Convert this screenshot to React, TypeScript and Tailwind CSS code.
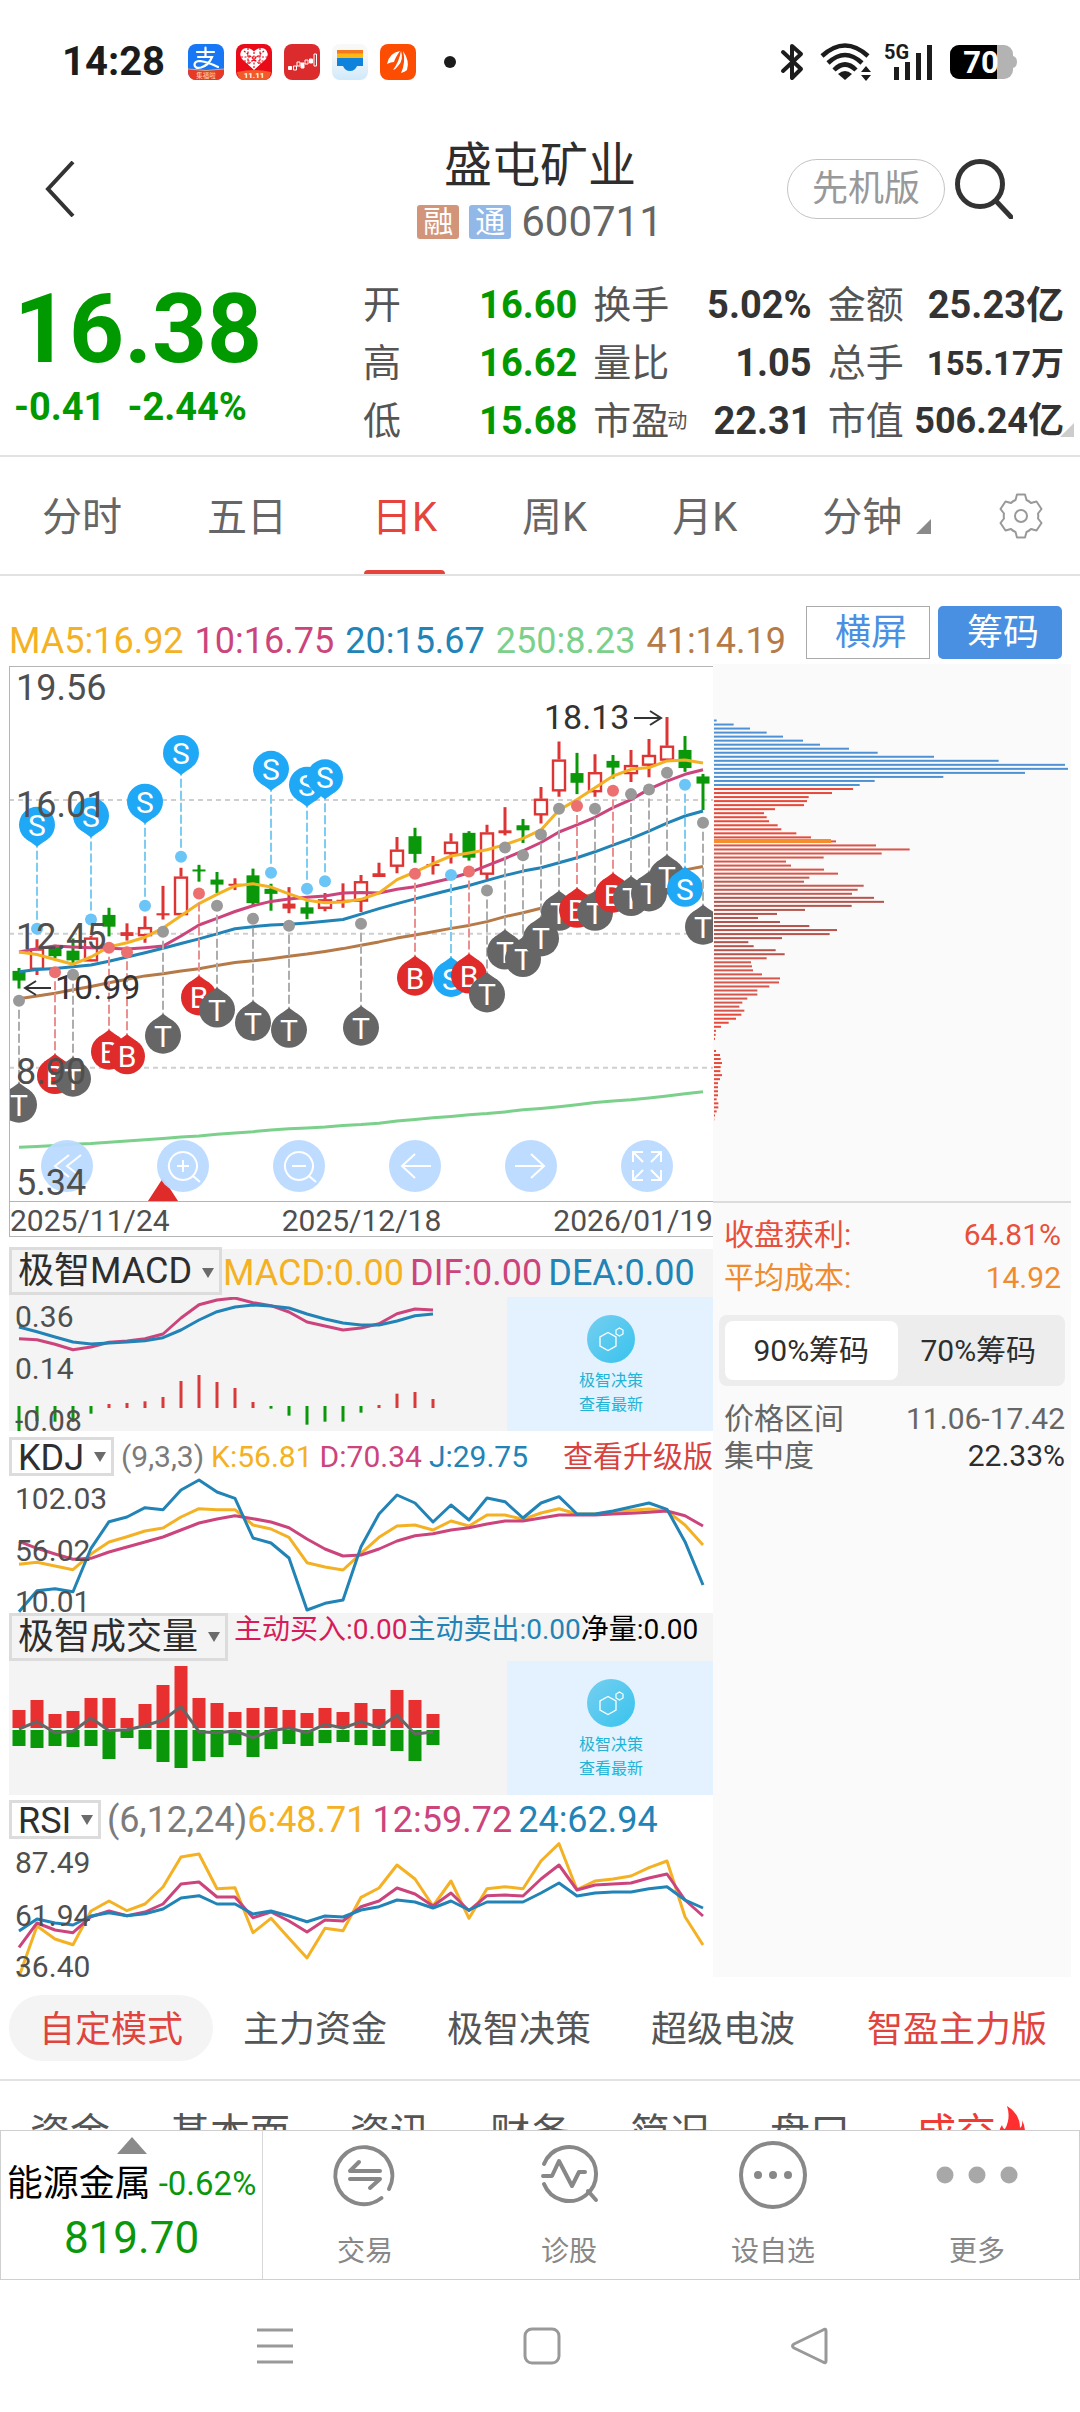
import React, { useState } from "react";

const STEP = 18;
const X0 = 19;
const px = (i: number) => X0 + STEP * i;

/* ---------- data ---------- */

// Vertical chart units per pixel for the price pane and the indicator panes.
const PRICE_UNIT = 2.376;
const PANE_UNIT = 3;
const py = (v: number) => v / PRICE_UNIT;

type Candle = [high: number, low: number, top: number, bottom: number, kind: "g" | "r" | "h"];

const candles: Candle[] = [
  [898, 947, 905, 928, "g"], [830, 915, 852, 900, "h"], [843, 875, 848, 870, "g"], [828, 888, 857, 880, "g"],
  [822, 882, 826, 880, "h"], [755, 823, 772, 800, "g"], [792, 833, 813, 822, "r"], [775, 838, 801, 820, "h"],
  [703, 783, 768, 773, "r"], [660, 770, 681, 770, "h"], [653, 693, 664, 668, "g"], [670, 720, 688, 700, "g"],
  [685, 713, 698, 701, "r"], [662, 750, 678, 744, "g"], [698, 762, 710, 722, "g"], [706, 768, 745, 757, "r"],
  [740, 782, 754, 769, "g"], [720, 763, 735, 755, "h"], [697, 755, 736, 742, "r"], [677, 765, 692, 738, "h"],
  [648, 682, 673, 682, "r"], [587, 673, 617, 655, "h"], [565, 648, 585, 627, "g"], [632, 676, 651, 656, "r"],
  [578, 650, 598, 625, "h"], [573, 643, 577, 636, "g"], [558, 687, 576, 674, "h"], [516, 583, 571, 578, "r"],
  [544, 601, 559, 571, "g"], [468, 555, 496, 533, "h"], [360, 491, 403, 476, "h"], [387, 485, 435, 458, "g"],
  [390, 491, 433, 478, "h"], [392, 448, 406, 422, "g"], [380, 456, 416, 435, "h"], [354, 445, 392, 415, "h"],
  [302, 404, 370, 403, "h"], [347, 432, 380, 423, "g"], [437, 523, 443, 460, "g"],
];

const ma5 = [860, 866, 878, 889, 872, 848, 838, 825, 803, 774, 745, 723, 703, 698, 706, 722, 737, 743, 741, 735, 720, 688, 670, 650, 632, 625, 617, 605, 590, 570, 523, 498, 470, 442, 426, 422, 406, 404, 411];
const ma10 = [860, 852, 846, 848, 850, 851, 853, 850, 846, 822, 796, 780, 764, 750, 740, 734, 730, 727, 720, 719, 720, 711, 705, 695, 685, 672, 655, 638, 620, 600, 575, 558, 540, 517, 498, 473, 454, 438, 427];
const ma20 = [907, 902, 899, 895, 891, 882, 872, 862, 851, 840, 829, 817, 805, 800, 796, 794, 791, 787, 783, 770, 757, 745, 734, 723, 712, 702, 690, 678, 668, 660, 648, 636, 622, 606, 591, 573, 554, 537, 525];
const ma41 = [971, 965, 958, 950, 942, 933, 925, 917, 912, 905, 900, 892, 885, 881, 876, 870, 865, 859, 852, 844, 836, 827, 820, 812, 804, 797, 788, 776, 767, 756, 745, 733, 722, 712, 700, 689, 678, 665, 657];
const ma250 = [1324, 1322, 1320, 1317, 1315, 1312, 1309, 1306, 1303, 1300, 1297, 1293, 1290, 1287, 1283, 1280, 1278, 1276, 1272, 1270, 1267, 1262, 1258, 1254, 1251, 1247, 1244, 1240, 1235, 1232, 1228, 1223, 1218, 1214, 1211, 1207, 1202, 1197, 1192];

type Mark = [index: number, dot: number, kind: "S" | "B" | "T", above?: boolean];
const marks: Mark[] = [
  [0, 976, "T"], [1, 805, "S", true], [2, 908, "B"], [3, 914, "T"], [4, 783, "S", true], [5, 850, "B"], [6, 861, "B"],
  [7, 750, "S", true], [8, 812, "T"], [9, 634, "S", true], [10, 721, "B"], [11, 750, "T"], [13, 781, "T"],
  [14, 672, "S", true], [15, 798, "T"], [16, 710, "S", true], [17, 692, "S", true], [19, 793, "T"], [22, 674, "B"],
  [24, 677, "S"], [25, 669, "B"], [26, 714, "T"], [27, 612, "T"], [28, 630, "T"], [29, 581, "T"], [30, 520, "T"],
  [31, 513, "B"], [32, 520, "T"], [33, 477, "B"], [34, 485, "T"], [35, 474, "T"], [36, 434, "T"], [37, 463, "S"], [38, 553, "T"],
];
const markColors = {
  S: { pin: "#1fa8f5", dot: "#6cc5f7", dash: "#7fccf2" },
  B: { pin: "#e02b2b", dot: "#ec7070", dash: "#ea9090" },
  T: { pin: "#666666", dot: "#999999", dash: "#adadad" },
};

const chipsBlue = [8, 59, 108, 158, 207, 267, 318, 405, 491, 660, 854, 1053, 1062, 933, 688, 482, 437];
const chipsRed = [
  417, 354, 284, 279, 270, 183, 150, 158, 165, 191, 202, 247, 291, 366, 486, 587, 503, 329, 216, 231, 330, 372, 286, 270, 449,
  431, 414, 480, 510, 413, 273, 189, 132, 198, 286, 369, 347, 204, 103, 119, 185, 212, 158, 111, 114, 117, 144, 198, 195, 166,
  130, 130, 100, 85, 76, 91, 82, 66, 44, 21, 6, 5, 3, 0, 0, 6, 18, 20, 24, 20, 19, 24, 18, 12, 12, 12, 12, 8, 13, 13, 8, 3, 1,
];
const redShade = (i: number) =>
  i < 13 ? "#e8493a" : i < 22 ? "#db5448" : i < 27 ? "#c65850" : i < 42 ? "#b4544d" : i < 56 ? "#d3574c" : "#e8493a";

const macdDif = [326, 329, 343, 359, 351, 337, 333, 326, 312, 264, 224, 210, 204, 218, 227, 246, 276, 288, 300, 294, 281, 251, 237, 240];
const macdDea = [291, 305, 321, 336, 342, 339, 336, 332, 323, 300, 270, 245, 231, 225, 228, 234, 252, 267, 279, 285, 285, 273, 257, 252];
const macdBars = [606, 573, 575, 576, 551, 522, 519, 514, 501, 453, 435, 456, 474, 516, 536, 557, 584, 575, 575, 548, 525, 491, 486, 507];

const kdjK = [1003, 997, 1008, 1019, 972, 936, 920, 903, 894, 861, 836, 839, 839, 885, 897, 922, 998, 1011, 1020, 970, 922, 888, 885, 900, 873, 888, 855, 855, 868, 849, 836, 852, 852, 846, 841, 837, 843, 885, 945];
const kdjD = [934, 955, 972, 988, 985, 966, 951, 936, 921, 900, 879, 867, 857, 866, 876, 893, 927, 957, 978, 975, 957, 933, 917, 911, 900, 893, 882, 873, 873, 864, 855, 855, 855, 852, 850, 847, 843, 857, 888];
const kdjJ = [1145, 1082, 1076, 1085, 955, 875, 861, 833, 839, 780, 750, 786, 805, 924, 939, 984, 1140, 1120, 1110, 950, 852, 795, 819, 876, 825, 870, 804, 815, 864, 819, 800, 852, 852, 843, 831, 819, 838, 935, 1065];

const volBuy = [330, 300, 342, 333, 294, 294, 354, 312, 255, 198, 294, 309, 336, 324, 321, 330, 339, 324, 336, 309, 327, 270, 300, 342];
const volSell = [438, 444, 438, 441, 438, 477, 414, 447, 486, 504, 483, 471, 435, 471, 447, 432, 438, 429, 426, 435, 438, 453, 483, 435];
const volNet = [387, 365, 398, 394, 354, 392, 389, 377, 360, 320, 395, 398, 393, 413, 392, 384, 398, 373, 384, 365, 383, 345, 402, 396];

const rsi6 = [1130, 978, 1017, 1034, 933, 903, 932, 912, 861, 771, 762, 866, 863, 998, 955, 1015, 1074, 985, 992, 892, 864, 795, 837, 918, 843, 955, 866, 860, 866, 783, 731, 869, 843, 837, 828, 803, 783, 950, 1035];
const rsi12 = [1042, 969, 990, 998, 950, 933, 947, 936, 912, 852, 846, 891, 891, 953, 936, 963, 996, 960, 963, 920, 903, 864, 882, 918, 879, 932, 887, 885, 888, 837, 795, 870, 855, 852, 849, 834, 822, 900, 948];
const rsi24 = [993, 957, 969, 975, 948, 938, 947, 941, 927, 894, 887, 912, 912, 942, 933, 948, 965, 948, 951, 930, 920, 900, 906, 924, 903, 930, 906, 906, 906, 879, 849, 888, 879, 876, 876, 866, 860, 900, 924];

/* ---------- shared drawing ---------- */

const C = { yellow: "#f4b124", pink: "#cc447c", blue: "#2183b6", green: "#7bd08b", brown: "#b57a48" };

function Line({ data, color, unit = PANE_UNIT, width = 3 }: { data: number[]; color: string; unit?: number; width?: number }) {
  return (
    <polyline
      fill="none"
      stroke={color}
      strokeWidth={width}
      strokeLinejoin="round"
      points={data.map((v, i) => `${px(i)},${(v / unit).toFixed(1)}`).join(" ")}
    />
  );
}

function AxisLabel({ y, x = 15, size = 30, children }: { y: number; x?: number; size?: number; children: React.ReactNode }) {
  return (
    <text x={x} y={y} fontSize={size} fill="#4f4f4f">
      {children}
    </text>
  );
}

function PriceChart() {
  return (
    <svg viewBox="9 76 704 535" className="block w-full" role="img" aria-label="日K线图">
      {[499, 817, 1135].map((v) => (
        <line key={v} x1="9" x2="713" y1={py(v)} y2={py(v)} stroke="#cfcfcf" strokeWidth="2" strokeDasharray="5 4" />
      ))}
      {candles.map(([h, l, t, b, kind], i) => {
        const x = px(i);
        const color = kind === "g" ? "#0a970a" : "#dd3434";
        if (kind === "h") {
          return (
            <g key={i} stroke={color} fill="none">
              <path d={`M${x} ${py(h)}V${py(t)}M${x} ${py(b)}V${py(l)}`} strokeWidth="3" />
              <rect x={x - 6} y={py(t) + 1} width="12" height={Math.max(4, py(b - t) - 1)} strokeWidth="2.400" />
            </g>
          );
        }
        return (
          <g key={i} fill={color}>
            <rect x={x - 1.5} y={py(h)} width="3" height={py(l - h)} />
            <rect x={x - 6.5} y={py(t)} width="13" height={Math.max(2, py(b - t))} />
          </g>
        );
      })}
      <Line data={ma250} color={C.green} unit={PRICE_UNIT} />
      <Line data={ma41} color={C.brown} unit={PRICE_UNIT} />
      <Line data={ma20} color={C.blue} unit={PRICE_UNIT} />
      <Line data={ma10} color={C.pink} unit={PRICE_UNIT} />
      <Line data={ma5} color={C.yellow} unit={PRICE_UNIT} />
      {marks.map(([i, dot, kind, above]) => {
        const dir = above ? -1 : 1;
        const x = px(i);
        const c = markColors[kind];
        const cy = py(dot + dir * 247);
        return (
          <g key={i}>
            <circle cx={x} cy={py(dot)} r="6" fill={c.dot} />
            <line x1={x} x2={x} y1={py(dot) + dir * 9} y2={cy - dir * 21} stroke={c.dash} strokeWidth="2" strokeDasharray="9 3" />
            <circle cx={x} cy={cy} r="18" fill={c.pin} />
            <path d={`M${x - 11} ${cy - dir * 14}L${x} ${cy - dir * 22}L${x + 11} ${cy - dir * 14}Z`} fill={c.pin} />
            <text x={x} y={cy + 11} fontSize="30" textAnchor="middle" fill="#ffffff">
              {kind}
            </text>
          </g>
        );
      })}
      <path d="M163 588L178 611H148Z" fill="#e02b2b" />
    </svg>
  );
}

function PriceLabels() {
  return (
    <svg viewBox="9 76 704 535" className="pointer-events-none absolute inset-0 block w-full">
      <AxisLabel x={16} y={110} size={36}>19.56</AxisLabel>
      <AxisLabel x={16} y={227} size={36}>16.01</AxisLabel>
      <AxisLabel x={16} y={359} size={36}>12.45</AxisLabel>
      <AxisLabel x={16} y={494} size={36}>8.90</AxisLabel>
      <AxisLabel x={16} y={605} size={36}>5.34</AxisLabel>
      <text x="544" y="139" fontSize="34" fill="#333">18.13</text>
      <path d="M634 128H661M650 121L661 128L650 135" fill="none" stroke="#333" strokeWidth="2" />
      <text x="55" y="409" fontSize="34" fill="#333">10.99</text>
      <path d="M51 398H25M36 391L25 398L36 405" fill="none" stroke="#333" strokeWidth="2" />
    </svg>
  );
}

const toolPaths: { label: string; d: string }[] = [
  { label: "最早", d: "M28 15L14 26L28 37M40 15L26 26L40 37" },
  { label: "放大", d: "M26 12A14 14 0 1 1 25.9 12M36 36L43 42M20 26H32M26 20V32" },
  { label: "缩小", d: "M26 12A14 14 0 1 1 25.9 12M36 36L43 42M19 26H33" },
  { label: "左移", d: "M42 26H13M26 14L13 26L26 38" },
  { label: "右移", d: "M10 26H39M26 14L39 26L26 38" },
  { label: "全屏", d: "M12 22V12H22M12 12L22 22M30 12H40V22M40 12L30 22M12 30V40H22M12 40L22 30M40 30V40H30M40 40L30 30" },
];

function ChartTools() {
  return (
    <div className="absolute inset-x-0 bottom-[9px] flex justify-between pl-8 pr-10">
      {toolPaths.map((t) => (
        <button key={t.label} type="button" aria-label={t.label} className="size-[52px] rounded-full bg-[#bbdaff]/95">
          <svg viewBox="0 0 52 52" className="size-full" fill="none" stroke="#fff" strokeWidth="2">
            <path d={t.d} />
          </svg>
        </button>
      ))}
    </div>
  );
}

function ChipChart() {
  return (
    <svg viewBox="713 74 358 537" className="block w-full" role="img" aria-label="筹码分布">
      {chipsBlue.map((w, i) => (
        <rect key={i} x="714" y={130 + i * 4.03 - 0.5} width={w / 3} height="2" fill="#4f92d4" />
      ))}
      {chipsRed.map((w, i) => (
        <rect key={i} x="714" y={130 + (i + 17) * 4.03 - 0.5} width={w / 3} height="2" fill={redShade(i)} />
      ))}
      <rect x="714" y="249" width="117" height="4" fill="#f58f2e" />
    </svg>
  );
}

function Picker({ label, value, options, className }: { label: string; value: string; options: string[]; className: string }) {
  const [v, setV] = useState(value);
  return (
    <label className="relative block shrink-0">
      <span className="sr-only">{label}</span>
      <select
        value={v}
        onChange={(e) => setV(e.target.value)}
        className={`block appearance-none pl-[9px] text-4xl leading-[42px] text-[#2e2e2e] ring-[3px] ring-inset ring-[#dcdcdc] ${className}`}
      >
        {options.map((o) => (
          <option key={o}>{o}</option>
        ))}
      </select>
      <svg viewBox="0 0 12 10" className="pointer-events-none absolute right-2 top-1/2 h-[10px] w-3 -translate-y-1/2">
        <path d="M0 0H12L6 10Z" fill="#6b6b6b" />
      </svg>
    </label>
  );
}

function PromoCard() {
  return (
    <button
      type="button"
      className="absolute inset-y-0 right-0 flex w-[206px] flex-col items-center bg-[#e3f2fe] pl-[2px] pt-[18px] text-base text-[#22b4d6]"
    >
      <svg viewBox="0 0 48 48" className="mb-[6px] size-12">
        <defs>
          <linearGradient id="promo" x1="0" y1="0" x2="1" y2="1">
            <stop offset="0" stopColor="#76cff0" />
            <stop offset="1" stopColor="#38c3ee" />
          </linearGradient>
        </defs>
        <circle cx="24" cy="24" r="24" fill="url(#promo)" />
        <path d="M21 17.5L29 22V31L21 35.500L13 31V22Z" fill="none" stroke="#fff" strokeWidth="1.300" />
        <path d="M32.500 13L36 15V19L32.500 21L29 19V15Z" fill="none" stroke="#fff" strokeWidth="1.200" />
      </svg>
      <span className="leading-6">极智决策</span>
      <span className="leading-6">查看最新</span>
    </button>
  );
}

/* ---------- status bar ---------- */

function AppIcons() {
  return (
    <div className="flex gap-3">
      <svg viewBox="0 0 36 36" className="size-9">
        <clipPath id="a1"><rect width="36" height="36" rx="8" /></clipPath>
        <g clipPath="url(#a1)">
          <rect width="36" height="36" fill="#1777f4" />
          <path d="M0 25Q18 28 36 25V36H0Z" fill="#e63a24" />
          <path d="M0 25Q18 28 36 25" stroke="#f6a26a" fill="none" />
        </g>
        <g fill="none" stroke="#fff" strokeLinecap="round">
          <path d="M9 8H26M17.500 3.500V13M10 13H24Q21 21 13 23.500Q7 25 6.500 21Q6.500 17 12 17Q20 18 30 23" strokeWidth="2.200" />
        </g>
        <text x="18" y="34" fontSize="6.500" textAnchor="middle" fill="#fbd9b5">集福啦</text>
      </svg>
      <svg viewBox="0 0 36 36" className="size-9">
        <rect width="36" height="36" rx="8" fill="#ea0a18" />
        <path d="M1 28Q18 24 35 28Q34 36 28 36H8Q2 36 1 28Z" fill="#f25a2a" />
        <path d="M18 26L6 15Q2 9 7 5Q13 2 18 7.500Q23 2 29 5Q34 9 30 15Z" fill="#fff" />
        <path d="M8 7L26 22M28 7L10 22M18 8V25M5 13H31M12 4V20M24 4V20M8 17H28" stroke="#ea0a18" strokeWidth="1.200" strokeDasharray="2 1.500" />
        <text x="18" y="34" fontSize="8" fontWeight="700" textAnchor="middle" fill="#fff">11.11</text>
      </svg>
      <svg viewBox="0 0 36 36" className="size-9">
        <rect width="36" height="36" rx="8" fill="#dc2b2d" />
        <g fill="none" stroke="#fff" strokeWidth="1">
          <path d="M9.500 22H12.500V26H9.500ZM13 18H16V22H13ZM21 16H24V20H21ZM30 10H32.500V22H30Z" />
          <path d="M4.500 22.500H7.500V25.500H4.500ZM17 19H20V24H17ZM25.500 15H28.500V19H25.500Z" fill="#fff" />
        </g>
      </svg>
      <svg viewBox="0 0 36 36" className="size-9">
        <defs>
          <linearGradient id="w" x1="0" y1="0" x2="0" y2="1">
            <stop offset="0.300" stopColor="#f8f8f8" />
            <stop offset="1" stopColor="#cfe9fb" />
          </linearGradient>
        </defs>
        <rect width="36" height="36" rx="8" fill="url(#w)" />
        <path d="M5 6H31V12H5Z" fill="#f47a1f" />
        <path d="M5 9.500H31V16H5Z" fill="#fdb813" />
        <path d="M5 14H31V22H25Q23 27 18 27Q13 27 11 22H5Z" fill="#0f83dc" />
      </svg>
      <svg viewBox="0 0 36 36" className="size-9">
        <rect width="36" height="36" rx="8" fill="#fd4d03" />
        <path d="M7 20Q9 9 20 7Q15 14 14 18Q11 18 7 20ZM13 26Q19 18 21 7Q24 16 18 22Q16 25 13 26ZM21 29Q26 18 23 7Q30 17 27 26Q25 28 21 29Z" fill="#fff" />
      </svg>
    </div>
  );
}

function StatusBar() {
  return (
    <div className="flex h-[124px] items-center pl-[62px] pr-[62px] text-[#1c1c1c]">
      <span className="text-[40px] font-bold leading-none">14:28</span>
      <div className="ml-[23px]">
        <AppIcons />
      </div>
      <span className="ml-7 size-3 rounded-full bg-[#1c1c1c]" />
      <div className="ml-auto flex items-center">
        <svg viewBox="0 0 24 38" className="h-[38px] w-6" fill="none" stroke="#1c1c1c" strokeWidth="4" strokeLinecap="round">
          <path d="M3 9L21 26L12 35V3L21 11L3 28" strokeLinejoin="round" />
        </svg>
        <svg viewBox="0 0 52 38" className="ml-4 h-[38px] w-[52px]" fill="none" stroke="#1c1c1c" strokeWidth="4.500">
          <path d="M2 13Q25 -8 48 13" />
          <path d="M8 20Q25 4 42 20" />
          <path d="M14 27Q25 16 36 27" />
          <path d="M18 31Q25 25 32 31L25 37Z" fill="#1c1c1c" stroke="none" />
          <path d="M41 29L46 23L51 29ZM41 32L46 38L51 32Z" fill="#1c1c1c" stroke="none" />
        </svg>
        <svg viewBox="0 0 50 38" className="ml-3 h-[38px] w-[50px] overflow-visible" fill="#1c1c1c">
          <text x="0" y="16" fontSize="20" fontWeight="700">5G</text>
          <path d="M10 24H15V37H10ZM21 19H26V37H21ZM32 10H37V37H32ZM43 2H48V37H43Z" />
        </svg>
        <svg viewBox="0 0 68 36" className="ml-4 h-9 w-[68px]">
          <clipPath id="bat"><rect y="1" width="63" height="34" rx="9" /></clipPath>
          <g clipPath="url(#bat)">
            <rect width="63" height="36" fill="#b3b3b3" />
            <rect width="47" height="36" fill="#000" />
          </g>
          <path d="M63 12Q67 13 67 18T63 24Z" fill="#b3b3b3" />
          <text x="31" y="29" fontSize="31" fontWeight="700" textAnchor="middle" fill="#fff">70</text>
        </svg>
      </div>
    </div>
  );
}

/* ---------- header and quote ---------- */

function Header() {
  return (
    <header className="grid h-[130px] grid-cols-[1fr_auto_1fr] items-center">
      <div className="pl-[45px]">
        <button type="button" aria-label="返回" className="block">
          <svg viewBox="0 0 30 56" className="h-14 w-[30px]" fill="none" stroke="#333" strokeWidth="4">
            <path d="M28 1L3 28L28 55" />
          </svg>
        </button>
      </div>
      <div className="pt-[10px] text-center">
        <h1 className="text-5xl leading-[56px] text-[#2e2e2e]">盛屯矿业</h1>
        <p className="flex items-center justify-center gap-[10px] text-[42px] leading-[56px] text-[#666]">
          <span className="flex h-[34px] w-[42px] items-center justify-center rounded-[3px] bg-[#d3957a] text-3xl leading-none text-white">融</span>
          <span className="flex h-[34px] w-[42px] items-center justify-center rounded-[3px] bg-[#92b8e8] text-3xl leading-none text-white">通</span>
          <span>600711</span>
        </p>
      </div>
      <div className="flex items-center justify-end gap-[10px] pr-[67px]">
        <button type="button" className="h-[60px] w-[158px] rounded-full border border-[#c4c4c4] text-4xl leading-none text-[#999]">先机版</button>
        <button type="button" aria-label="搜索">
          <svg viewBox="0 0 58 60" className="h-[60px] w-[58px]" fill="none" stroke="#333" strokeWidth="5">
            <circle cx="25" cy="25" r="22.500" />
            <path d="M41 42L56 58" strokeLinecap="round" />
          </svg>
        </button>
      </div>
    </header>
  );
}

function Stat({ name, note, children, className = "text-[#333] text-[38px]" }: { name: string; note?: string; children: React.ReactNode; className?: string }) {
  return (
    <div className="flex h-[58px] items-center justify-between">
      <dt className="flex items-center whitespace-nowrap text-[38px] leading-none text-[#555]">
        {name}
        {note && <span className="-ml-[2px] text-xl leading-none">{note}</span>}
      </dt>
      <dd className={`whitespace-nowrap font-bold leading-none ${className}`}>{children}</dd>
    </div>
  );
}

function Quote() {
  const green = "text-[#009900] text-[38px]";
  return (
    <section className="relative flex border-b-2 border-[#e2e2e2] pb-[5px] pt-[22px]">
      <div className="w-[363px] shrink-0 pl-[14px] text-[#009900]">
        <p className="text-[96px] font-bold leading-[106px]">16.38</p>
        <p className="flex gap-[22px] text-[38px] font-bold leading-[50px]">
          <span>-0.41</span>
          <span>-2.44%</span>
        </p>
      </div>
      <dl className="grid flex-1 grid-cols-[214fr_218fr_236fr] gap-x-4 pr-4">
        <Stat name="开" className={green}>16.60</Stat>
        <Stat name="换手">5.02%</Stat>
        <Stat name="金额">25.23亿</Stat>
        <Stat name="高" className={green}>16.62</Stat>
        <Stat name="量比">1.05</Stat>
        <Stat name="总手" className="text-[#333] text-[33px]">155.17万</Stat>
        <Stat name="低" className={green}>15.68</Stat>
        <Stat name="市盈" note="动">22.31</Stat>
        <Stat name="市值" className="text-[#333] text-4xl">506.24亿</Stat>
      </dl>
      <svg viewBox="0 0 14 14" className="absolute bottom-[18px] right-[6px] size-[14px]">
        <path d="M14 0V14H0Z" fill="#ccc" />
      </svg>
    </section>
  );
}

function PeriodTabs() {
  const [active, setActive] = useState("日K");
  return (
    <nav className="flex items-center border-b-2 border-[#e2e2e2] pl-[42px] pr-[36px]">
      <div className="flex h-[117px] gap-[85px]">
        {["分时", "五日", "日K", "周K", "月K", "分钟"].map((t) => (
          <button
            key={t}
            type="button"
            aria-pressed={active === t}
            onClick={() => setActive(t)}
            className="relative flex items-center whitespace-nowrap pt-1 text-[40px] leading-none text-[#666] aria-pressed:text-[#e5443c]"
          >
            {t}
            {t === "分钟" && (
              <svg viewBox="0 0 15 15" className="ml-[14px] mt-[18px] size-[15px]">
                <path d="M15 0V15H0Z" fill="#8a8a8a" />
              </svg>
            )}
            {active === t && <span className="absolute -inset-x-2 bottom-0 h-1 rounded-t bg-[#e5443c]" />}
          </button>
        ))}
      </div>
      <button type="button" aria-label="设置" className="ml-auto">
        <svg viewBox="0 0 46 46" className="size-[46px]" fill="none" stroke="#999" strokeWidth="2" strokeLinejoin="round">
          <path d="M19 1.500H27L28.500 7Q31 8 33 10L38.500 8.500L43.500 16L40 20.500Q40.500 23 40 25.500L43.500 30L38.500 37.500L33 36Q31 38 28.500 39L27 44.500H19L17.500 39Q15 38 13 36L7.500 37.500L2.500 30L6 25.500Q5.500 23 6 20.500L2.500 16L7.500 8.500L13 10Q15 8 17.500 7Z" />
          <circle cx="23" cy="23" r="6" />
        </svg>
      </button>
    </nav>
  );
}

/* ---------- chart columns ---------- */

function Legend() {
  return (
    <div className="flex h-[88px] items-start justify-between pl-[9px] pr-[18px]">
      <p className="flex gap-[11px] whitespace-nowrap pt-11 text-4xl leading-[42px]">
        <span className="text-[#f4b124]">MA5:16.92</span>
        <span className="text-[#cc447c]">10:16.75</span>
        <span className="text-[#2183b6]">20:15.67</span>
        <span className="text-[#7bd08b]">250:8.23</span>
        <span className="text-[#b57a48]">41:14.19</span>
      </p>
      <div className="flex gap-2 pt-[30px] text-4xl leading-none">
        <button type="button" className="h-[53px] w-[124px] border border-[#aaa] pl-[6px] text-[#4a90e2]">横屏</button>
        <button type="button" className="h-[53px] w-[124px] rounded-[5px] bg-[#4a90e2] pl-[6px] text-white">筹码</button>
      </div>
    </div>
  );
}

function Indicators() {
  return (
    <div className="min-w-0 pt-[2px]">
      <div className="relative">
        <PriceChart />
        <ChartTools />
        <PriceLabels />
        <span className="pointer-events-none absolute inset-0 border-l border-t border-[#b5b5b5]" />
      </div>
      <div className="flex h-9 items-center justify-between border-y border-l border-[#b5b5b5] pt-[3px] text-3xl leading-none text-[#4f4f4f]">
        <span>2025/11/24</span>
        <span>2025/12/18</span>
        <span>2026/01/19</span>
      </div>

      <section className="mt-3 bg-[#f4f4f4]">
        <div className="flex h-12 items-center gap-[6px] whitespace-nowrap text-4xl leading-none">
          <Picker label="指标一" value="极智MACD" options={["极智MACD", "MACD"]} className="-mt-1 h-12 w-[213px]" />
          <span className="-ml-[5px] text-[#f4b124]">MACD:0.00</span>
          <span className="text-[#cc447c]">DIF:0.00</span>
          <span className="text-[#2183b6]">DEA:0.00</span>
        </div>
        <div className="relative">
          <svg viewBox="9 67 704 134" className="block w-full" role="img" aria-label="MACD">
            {macdBars.map((v, i) => {
              const red = (i > 4 && i < 14) || i > 19;
              return <line key={i} x1={px(i)} x2={px(i)} y1={red ? 178 : 176} y2={v / 3} stroke={red ? "#d83a3a" : "#0a970a"} strokeWidth="3" />;
            })}
            <Line data={macdDif} color={C.pink} />
            <Line data={macdDea} color={C.blue} />
            <AxisLabel y={97}>0.36</AxisLabel>
            <AxisLabel y={149}>0.14</AxisLabel>
            <AxisLabel y={201}>-0.08</AxisLabel>
          </svg>
          <PromoCard />
        </div>
      </section>

      <section>
        <div className="flex h-[45px] items-center gap-[7px] whitespace-nowrap pt-[6px] text-3xl leading-none">
          <Picker label="指标二" value="KDJ" options={["KDJ", "BOLL"]} className="h-[39px] w-[105px]" />
          <span className="text-[#7b7b7b]">(9,3,3)</span>
          <span className="text-[#f4b124]">K:56.81</span>
          <span className="text-[#cc447c]">D:70.34</span>
          <span className="text-[#2183b6]">J:29.75</span>
          <a href="#upgrade" className="ml-auto text-[#d8423f]">查看升级版</a>
        </div>
        <svg viewBox="9 246 704 137" className="block w-full" role="img" aria-label="KDJ">
          <Line data={kdjK} color={C.yellow} />
          <Line data={kdjD} color={C.pink} />
          <Line data={kdjJ} color={C.blue} />
          <AxisLabel y={279}>102.03</AxisLabel>
          <AxisLabel y={331}>56.02</AxisLabel>
          <AxisLabel y={382}>10.01</AxisLabel>
        </svg>
      </section>

      <section className="bg-[#f4f4f4]">
        <div className="flex h-12 whitespace-nowrap">
          <Picker label="指标三" value="极智成交量" options={["极智成交量", "成交量"]} className="h-12 w-[219px]" />
          <p className="flex pl-[6px] text-[28px] leading-[34px]">
            <span className="text-[#d81b5a]">主动买入:0.00</span>
            <span className="text-[#2183b6]">主动卖出:0.00</span>
            <span className="text-black">净量:0.00</span>
          </p>
        </div>
        <div className="relative">
          <svg viewBox="9 61 704 134" className="block w-full" role="img" aria-label="成交量">
            {volBuy.map((v, i) => (
              <g key={i}>
                <rect x={px(i) - 6.5} y={v / 3} width="13" height={128 - v / 3} fill="#e83030" />
                <rect x={px(i) - 6.5} y="130" width="13" height={volSell[i] / 3 - 130} fill="#0a970a" />
              </g>
            ))}
            <Line data={volNet} color="#666666" />
          </svg>
          <PromoCard />
        </div>
      </section>

      <section>
        <div className="flex h-[45px] items-center gap-[6px] whitespace-nowrap pt-[4px] text-4xl leading-none">
          <Picker label="指标四" value="RSI" options={["RSI", "WR"]} className="h-[39px] w-[92px]" />
          <span className="text-[#7b7b7b]">(6,12,24)</span>
          <span className="-ml-[6px] text-[#f4b124]">6:48.71</span>
          <span className="text-[#cc447c]">12:59.72</span>
          <span className="text-[#2183b6]">24:62.94</span>
        </div>
        <svg viewBox="9 240 704 137" className="block w-full" role="img" aria-label="RSI">
          <Line data={rsi6} color={C.yellow} />
          <Line data={rsi12} color={C.pink} />
          <Line data={rsi24} color={C.blue} />
          <AxisLabel y={273}>87.49</AxisLabel>
          <AxisLabel y={326}>61.94</AxisLabel>
          <AxisLabel y={377}>36.40</AxisLabel>
        </svg>
      </section>
    </div>
  );
}

function ChipPanel() {
  const [range, setRange] = useState("90%筹码");
  return (
    <aside className="min-w-0 bg-[#fafafa]">
      <ChipChart />
      <div className="border-t-2 border-[#dcdcdc] px-[6px] pt-[10px] text-3xl">
        <p className="flex justify-between pl-[5px] pr-1 leading-[43px] text-[#e8503c]">
          <span>收盘获利:</span>
          <span>64.81%</span>
        </p>
        <p className="flex justify-between pl-[5px] pr-1 leading-[43px] text-[#f08c2e]">
          <span>平均成本:</span>
          <span>14.92</span>
        </p>
        <div className="mt-4 grid h-[71px] grid-cols-[172fr_161fr] rounded-lg bg-[#ededed] p-[6px]">
          {["90%筹码", "70%筹码"].map((r) => (
            <button
              key={r}
              type="button"
              aria-pressed={range === r}
              onClick={() => setRange(r)}
              className="whitespace-nowrap rounded-lg leading-none text-[#2e2e2e] aria-pressed:bg-white"
            >
              {r}
            </button>
          ))}
        </div>
        <p className="mt-[14px] flex justify-between pl-[5px] leading-[37px] text-[#666]">
          <span>价格区间</span>
          <span>11.06-17.42</span>
        </p>
        <p className="flex justify-between pl-[5px] leading-[37px] text-[#666]">
          <span>集中度</span>
          <span className="text-[#2e2e2e]">22.33%</span>
        </p>
      </div>
    </aside>
  );
}

/* ---------- bottom ---------- */

function ModeTabs() {
  return (
    <nav className="flex h-[104px] items-center whitespace-nowrap border-b-2 border-[#e2e2e2] pl-[9px] pr-[33px] text-4xl leading-none text-[#555]">
      <button type="button" aria-pressed="true" className="h-[66px] w-[204px] rounded-full bg-[#f4f4f4] pt-1 text-[#e0443e]">自定模式</button>
      <button type="button" className="ml-[30px] pt-1">主力资金</button>
      <button type="button" className="ml-[60px] pt-1">极智决策</button>
      <button type="button" className="ml-[60px] pt-1">超级电波</button>
      <button type="button" className="ml-auto pt-1 text-[#e0443e]">智盈主力版</button>
    </nav>
  );
}

function DetailTabs() {
  return (
    <nav className="flex h-[49px] gap-[60px] overflow-hidden whitespace-nowrap pl-[30px] pt-[23px] text-[40px] leading-[60px] text-[#555]">
      {["资金", "基本面", "资讯", "财务", "简况", "盘口"].map((t) => (
        <a key={t} href={`#${t}`}>{t}</a>
      ))}
      <a href="#成交" className="relative ml-[6px] text-[#ee3b34]">
        成交
        <svg viewBox="0 0 28 40" className="absolute -right-[30px] top-[2px] h-10 w-7" fill="#ff2f2f">
          <path d="M9 0Q22 8 22 22Q25 20 24 14Q30 26 24 36Q14 44 5 36Q-2 28 4 19Q5 23 7 23Q13 12 9 0Z" />
        </svg>
      </a>
    </nav>
  );
}

const actions = [
  {
    label: "交易",
    icon: (
      <>
        <path d="M60 50A28.500 28.500 0 1 0 52.500 59" />
        <path d="M51 32H21L30 23M21 40H51L41 49" strokeLinejoin="round" />
      </>
    ),
  },
  {
    label: "诊股",
    icon: (
      <>
        <path d="M11 25A27 27 0 1 1 11 45" />
        <path d="M10 37H19L26 22L39 47L46 33H52M55 52L63 61" strokeLinejoin="round" />
      </>
    ),
  },
  {
    label: "设自选",
    icon: (
      <>
        <circle cx="36" cy="36" r="32" />
        <path d="M21 36H21.010M36 36H36.010M51 36H51.010" strokeWidth="8" />
      </>
    ),
  },
  { label: "更多", icon: <path d="M4 36H4.010M36 36H36.010M68 36H68.010" stroke="#a8a8a8" strokeWidth="17" /> },
];

function BottomBar() {
  return (
    <footer className="flex h-[150px] border border-[#cfcfcf]">
      <button type="button" className="flex w-[262px] shrink-0 flex-col items-center border-r border-[#d8d8d8] pt-[6px]">
        <svg viewBox="0 0 30 17" className="h-[17px] w-[30px]">
          <path d="M15 0L30 17H0Z" fill="#8a8a8a" />
        </svg>
        <span className="flex items-center gap-2 whitespace-nowrap pt-[2px]">
          <span className="text-4xl leading-[56px] text-black">能源金属</span>
          <span className="text-[33px] leading-[56px] text-[#0a970a]">-0.62%</span>
        </span>
        <span className="text-[44px] leading-[52px] text-[#0a970a]">819.70</span>
      </button>
      {actions.map((a) => (
        <button key={a.label} type="button" className="flex flex-1 flex-col items-center pt-2 text-[28px] leading-10 text-[#888]">
          <svg
            viewBox="0 0 72 72"
            className="mb-[21px] size-[72px] shrink-0 overflow-visible"
            fill="none"
            stroke="#888"
            strokeWidth="4"
            strokeLinecap="round"
          >
            {a.icon}
          </svg>
          {a.label}
        </button>
      ))}
    </footer>
  );
}

function SystemNav() {
  return (
    <div className="flex h-[132px] items-center justify-between pl-[256px] pr-[252px]">
      <button type="button" aria-label="最近任务">
        <svg viewBox="0 0 38 38" className="size-[38px]" stroke="#999" strokeWidth="3">
          <path d="M1 3H37M1 19H37M1 35H37" />
        </svg>
      </button>
      <button type="button" aria-label="主页">
        <svg viewBox="0 0 38 38" className="size-[38px]" fill="none" stroke="#999" strokeWidth="3">
          <rect x="2" y="2" width="34" height="34" rx="7" />
        </svg>
      </button>
      <button type="button" aria-label="返回上一页">
        <svg viewBox="0 0 38 38" className="size-[38px]" fill="none" stroke="#999" strokeWidth="3" strokeLinejoin="round">
          <path d="M36 4V34Q36 37 33 35L4 21Q1 19 4 17L33 3Q36 1 36 4Z" />
        </svg>
      </button>
    </div>
  );
}

export default function App() {
  return (
    <div className="min-h-screen bg-white font-[Roboto,'Noto_Sans_CJK_SC',sans-serif]">
      <StatusBar />
      <Header />
      <Quote />
      <PeriodTabs />
      <Legend />
      <main className="mx-[9px] grid grid-cols-[704fr_358fr]">
        <Indicators />
        <ChipPanel />
      </main>
      <ModeTabs />
      <DetailTabs />
      <BottomBar />
      <SystemNav />
    </div>
  );
}
